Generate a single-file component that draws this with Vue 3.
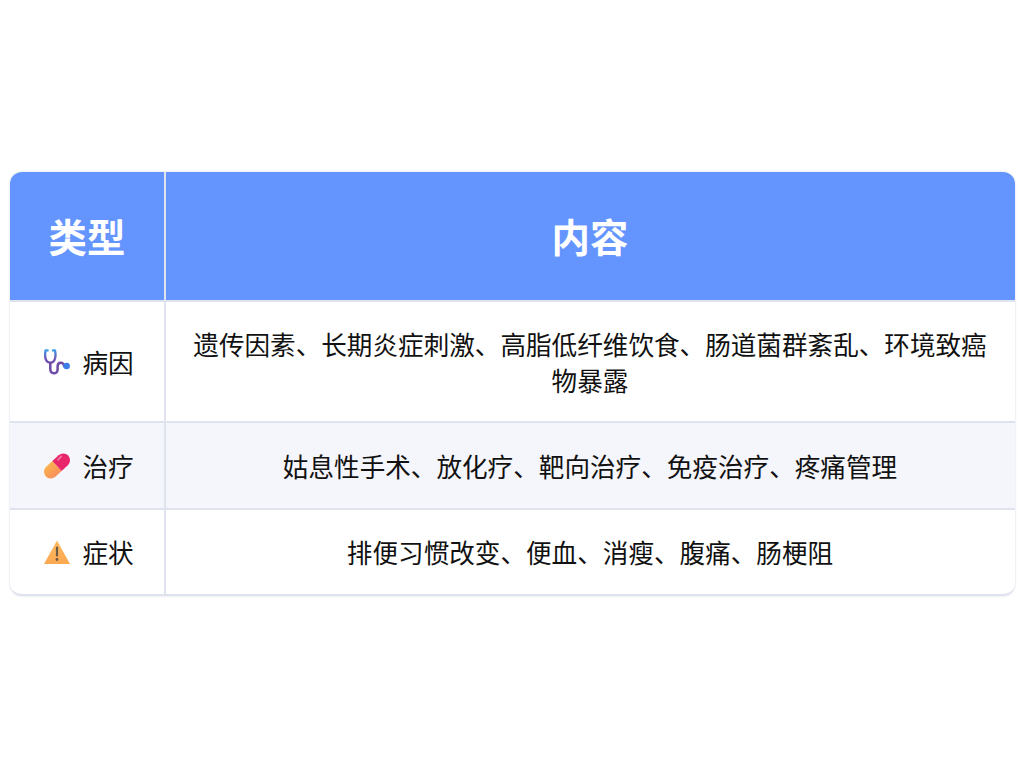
<script setup>
const rows = [
  { icon: 'steth', type: '病因', text: '遗传因素、长期炎症刺激、高脂低纤维饮食、肠道菌群紊乱、环境致癌物暴露' },
  { icon: 'pill', type: '治疗', text: '姑息性手术、放化疗、靶向治疗、免疫治疗、疼痛管理' },
  { icon: 'warn', type: '症状', text: '排便习惯改变、便血、消瘦、腹痛、肠梗阻' },
]
</script>

<template>
  <div class="page">
    <table class="tbl">
      <thead>
        <tr>
          <th class="c1">类型</th>
          <th>内容</th>
        </tr>
      </thead>
      <tbody>
        <tr v-for="r in rows" :key="r.type">
          <td class="c1">
            <span class="type">
              <svg v-if="r.icon === 'steth'" class="ico" viewBox="0 0 26 26">
                <defs>
                  <linearGradient id="st" x1="0" y1="0" x2="0" y2="1">
                    <stop offset="0" stop-color="#3f9be8" />
                    <stop offset="0.55" stop-color="#6a62c0" />
                    <stop offset="1" stop-color="#6f49a8" />
                  </linearGradient>
                </defs>
                <path d="M3.6 1.4H1.6C0.8 5.5 0.8 9 2.4 11.6C4.2 14.4 8.4 14.4 10.2 11.6C11.8 9 11.8 5.5 11 1.4H9" fill="none" stroke="url(#st)" stroke-width="2.4" stroke-linecap="round" stroke-linejoin="round" />
                <path d="M6.3 14V20C6.3 25.6 13.6 25.6 13.6 20.4V17.5C13.6 12.4 20 12.8 20 17" fill="none" stroke="#6f4aa8" stroke-width="2.5" stroke-linecap="round" />
                <circle cx="22.6" cy="17" r="3.3" fill="#3b7de8" />
              </svg>
              <svg v-else-if="r.icon === 'pill'" class="ico" viewBox="0 0 26 26">
                <defs>
                  <linearGradient id="or" x1="0" y1="0" x2="0" y2="1">
                    <stop offset="0" stop-color="#fbb04f" />
                    <stop offset="1" stop-color="#f7905a" />
                  </linearGradient>
                </defs>
                <g transform="rotate(-43 13 13)">
                  <path d="M13 6.2H4.5a6.8 6.8 0 0 0 0 13.6H13Z" fill="url(#or)" />
                  <path d="M13 6.2H21.5a6.8 6.8 0 0 1 0 13.6H13Z" fill="#e8266a" />
                  <rect x="17" y="8.2" width="6.5" height="1.6" rx="0.8" fill="#f47aa6" />
                </g>
              </svg>
              <svg v-else class="ico" viewBox="0 0 26 26">
                <defs>
                  <linearGradient id="wr" x1="0" y1="0" x2="0" y2="1">
                    <stop offset="0" stop-color="#ffba60" />
                    <stop offset="1" stop-color="#fba851" />
                  </linearGradient>
                </defs>
                <path d="M13 1.5L26 25H0Z" fill="url(#wr)" />
                <rect x="11.9" y="7.5" width="2.2" height="10" rx="1" fill="#6b5a4a" />
                <circle cx="13" cy="20.5" r="1.4" fill="#6b5a4a" />
              </svg>
              {{ r.type }}
            </span>
          </td>
          <td>{{ r.text }}</td>
        </tr>
      </tbody>
    </table>
  </div>
</template>

<style>
body { margin: 0; background: #fff; }
</style>

<style scoped>
.page {
  box-sizing: border-box;
  min-height: 768px;
  padding: 0 9px 0 10px;
  display: flex;
  align-items: center;
  font-family: "Noto Sans CJK SC", sans-serif;
}
.tbl {
  width: 100%;
  border-collapse: separate;
  border-spacing: 0;
  border-radius: 12px;
  box-shadow: 0 0 2px rgba(60, 70, 110, 0.25);
  background: #fff;
  color: #111;
  font-size: 25.6px;
  line-height: 1.4;
  text-align: center;
}
th {
  background: #6495ff;
  color: #fff;
  font-size: 38.4px;
  font-weight: 700;
  padding: 37px 25px 37px 24px;
  border-left: 2px solid #dfe3ee;
}
th.c1 { border-top-left-radius: 12px; }
th:last-child { border-top-right-radius: 12px; }
td {
  padding: 24px 25px 24px 24px;
  border-top: 2px solid #dfe3ee;
  border-left: 2px solid #dfe3ee;
}
tbody tr:nth-child(n + 2) td { padding-top: 24.4px; }
tbody tr:last-child td { border-bottom: 2px solid #dfe3ee; }
tbody tr:last-child td.c1 { border-bottom-left-radius: 12px; }
tbody tr:last-child td:last-child { border-bottom-right-radius: 12px; }
th.c1, td.c1 {
  width: 154px;
  box-sizing: border-box;
  padding-left: 10px;
  padding-right: 6px;
  border-left: 0;
  white-space: nowrap;
}
tbody tr:nth-child(2) td { background: #f5f6fb; }
th.c1 { padding-right: 10px; }
.type {
  display: flex;
  justify-content: center;
  align-items: center;
  gap: 12px;
}
.ico { width: 26px; height: 26px; flex: none; }
</style>
